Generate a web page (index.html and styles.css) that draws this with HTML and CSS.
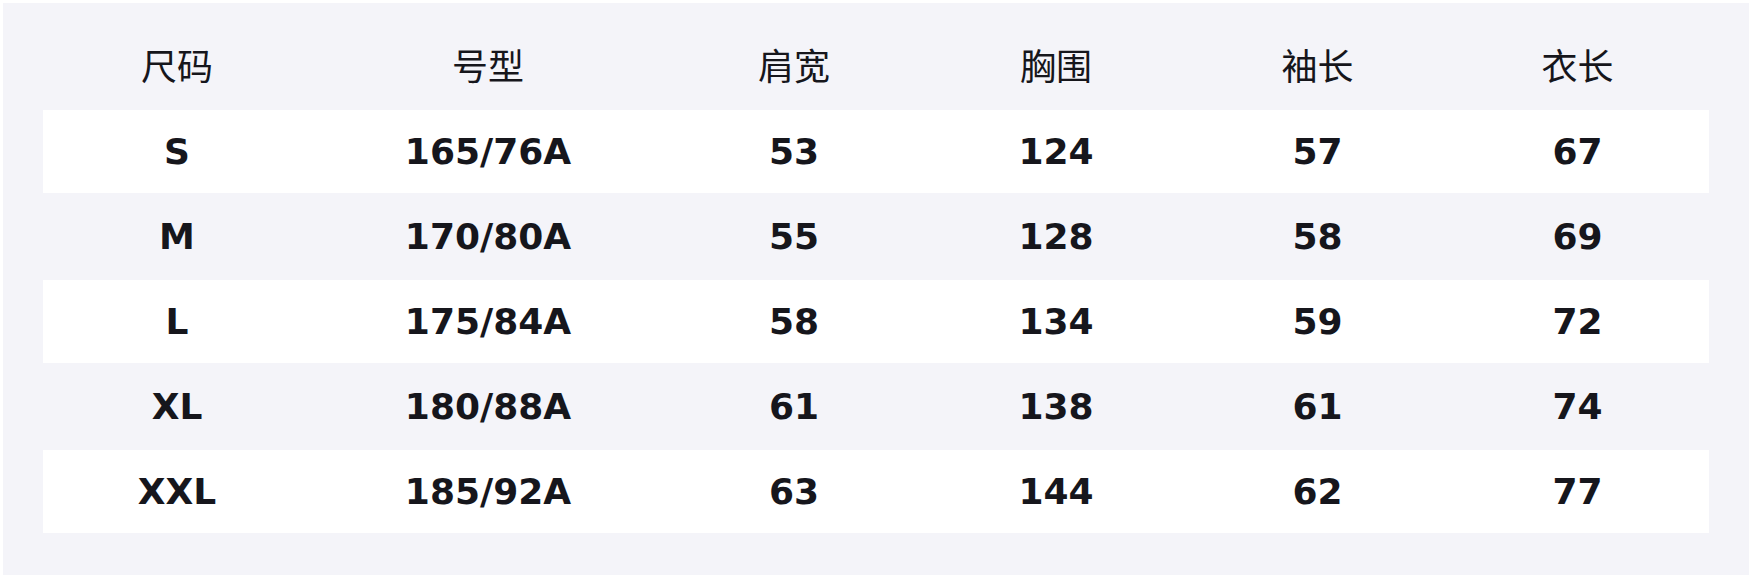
FILE: index.html
```html
<!DOCTYPE html>
<html lang="zh">
<head>
<meta charset="utf-8">
<link rel="stylesheet" href="styles.css">
</head>
<body>
<div class="panel">
  <div class="table">
    <div class="row head">
      <div class="cell">尺码</div><div class="cell">号型</div><div class="cell">肩宽</div><div class="cell">胸围</div><div class="cell">袖长</div><div class="cell">衣长</div>
    </div>
    <div class="row body odd">
      <div class="cell">S</div><div class="cell">165/76A</div><div class="cell">53</div><div class="cell">124</div><div class="cell">57</div><div class="cell">67</div>
    </div>
    <div class="row body even">
      <div class="cell">M</div><div class="cell">170/80A</div><div class="cell">55</div><div class="cell">128</div><div class="cell">58</div><div class="cell">69</div>
    </div>
    <div class="row body odd">
      <div class="cell">L</div><div class="cell">175/84A</div><div class="cell">58</div><div class="cell">134</div><div class="cell">59</div><div class="cell">72</div>
    </div>
    <div class="row body even">
      <div class="cell">XL</div><div class="cell">180/88A</div><div class="cell">61</div><div class="cell">138</div><div class="cell">61</div><div class="cell">74</div>
    </div>
    <div class="row body odd">
      <div class="cell">XXL</div><div class="cell">185/92A</div><div class="cell">63</div><div class="cell">144</div><div class="cell">62</div><div class="cell">77</div>
    </div>
  </div>
</div>
</body>
</html>
```
FILE: styles.css
```css
html, body {
  margin: 0;
  padding: 0;
  background: #ffffff;
}
body {
  padding: 3px;
  font-family: "DejaVu Sans", "Noto Sans CJK SC", sans-serif;
  color: #16161c;
}
.panel {
  background: #f4f4f9;
  height: 572px;
  box-sizing: border-box;
  padding: 40px 40px 42px;
}
.table {
  display: flex;
  flex-direction: column;
}
.row {
  display: grid;
  grid-template-columns: 268px 354px 258px 266px 257px 263px;
}
.cell {
  display: flex;
  align-items: center;
  justify-content: center;
  line-height: 1;
}
.head {
  height: 67px;
}
.head .cell {
  font-family: "Noto Sans CJK SC", sans-serif;
  font-size: 36px;
  font-weight: 400;
  padding-bottom: 25px;
}
.body .cell {
  font-size: 36px;
  font-weight: 700;
}
.odd {
  height: 83px;
  background: #ffffff;
}
.even {
  height: 87px;
}
```
